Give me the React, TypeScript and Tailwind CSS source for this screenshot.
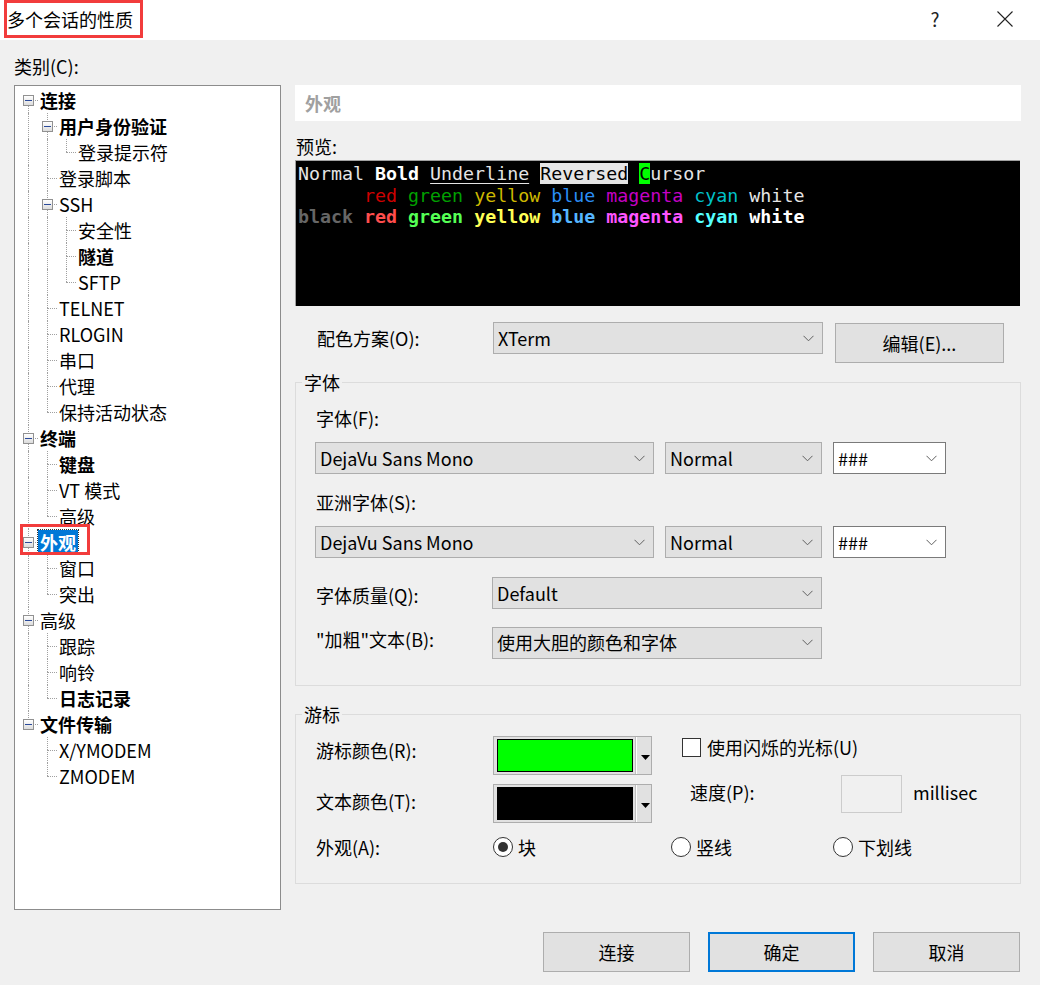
import React from 'react';

type TreeItem = { label: string; bold?: boolean; selected?: boolean; children?: TreeItem[] };

type Row = {
  label: string;
  level: number;
  bold?: boolean;
  selected?: boolean;
  exp: boolean;
  first: boolean;
  last: boolean;
  cont: boolean[];
};

const tree: TreeItem[] = [
  {
    label: '连接',
    bold: true,
    children: [
      { label: '用户身份验证', bold: true, children: [{ label: '登录提示符' }] },
      { label: '登录脚本' },
      { label: 'SSH', children: [{ label: '安全性' }, { label: '隧道', bold: true }, { label: 'SFTP' }] },
      { label: 'TELNET' },
      { label: 'RLOGIN' },
      { label: '串口' },
      { label: '代理' },
      { label: '保持活动状态' },
    ],
  },
  { label: '终端', bold: true, children: [{ label: '键盘', bold: true }, { label: 'VT 模式' }, { label: '高级' }] },
  { label: '外观', bold: true, selected: true, children: [{ label: '窗口' }, { label: '突出' }] },
  { label: '高级', children: [{ label: '跟踪' }, { label: '响铃' }, { label: '日志记录', bold: true }] },
  { label: '文件传输', bold: true, children: [{ label: 'X/YMODEM' }, { label: 'ZMODEM' }] },
];

function flatten(items: TreeItem[], level: number, cont: boolean[], out: Row[]) {
  items.forEach((it, i) => {
    const last = i === items.length - 1;
    out.push({
      label: it.label,
      level,
      bold: it.bold,
      selected: it.selected,
      exp: !!it.children,
      first: level === 0 && i === 0,
      last,
      cont,
    });
    if (it.children) flatten(it.children, level + 1, [...cont, !last], out);
  });
  return out;
}

const rows = flatten(tree, 0, [], []);

const TreeRow: React.FC<{ row: Row }> = ({ row }) => {
  const x = 13 + 19 * row.level;
  const textX = 23 + 19 * row.level;
  return (
    <div className="relative h-[26px] flex items-center">
      {row.cont.map((c, a) =>
        c ? (
          <span
            key={a}
            className="absolute top-0 bottom-0 border-l border-dotted border-[#a0a0a0]"
            style={{ left: 13 + 19 * a }}
          />
        ) : null
      )}
      {!row.first && (
        <span className="absolute top-0 h-[13px] border-l border-dotted border-[#a0a0a0]" style={{ left: x }} />
      )}
      {!row.last && (
        <span className="absolute top-[13px] bottom-0 border-l border-dotted border-[#a0a0a0]" style={{ left: x }} />
      )}
      <span className="absolute top-[13px] w-[10px] border-t border-dotted border-[#a0a0a0]" style={{ left: x }} />
      {row.exp && (
        <span
          className="absolute top-[8px] w-[11px] h-[11px] border border-[#919191] bg-gradient-to-b from-white to-[#dcdcdc] flex items-center justify-center"
          style={{ left: x - 5 }}
        >
          <span className="w-[7px] h-px bg-[#2a4a9a]" />
        </span>
      )}
      <span
        className={`relative px-[2px] leading-[24px] whitespace-pre ${row.bold ? 'font-bold' : ''} ${
          row.selected ? 'bg-[#0078d7] text-white outline-1 outline-dotted outline-[#333]' : ''
        }`}
        style={{ marginLeft: textX }}
      >
        {row.label}
      </span>
      {row.selected && (
        <span className="absolute left-[5px] top-[-5px] w-[70px] h-[31px] border-[3px] border-[#f23c3c] pointer-events-none" />
      )}
    </div>
  );
};

const Chevron: React.FC = () => (
  <svg width="11" height="7" viewBox="0 0 11 7" className="shrink-0">
    <polyline points="0.5,0.8 5.5,5.8 10.5,0.8" fill="none" stroke="#606060" strokeWidth="1" />
  </svg>
);

const Select: React.FC<{ className: string; text: string; white?: boolean }> = ({ className, text, white }) => (
  <div
    className={`h-[32px] flex items-center justify-between border pl-[4px] pr-[8px] ${
      white ? 'bg-white border-[#7a7a7a]' : 'bg-[#e1e1e1] border-[#adadad]'
    } ${className}`}
  >
    <span className="whitespace-pre">{text}</span>
    <Chevron />
  </div>
);

const ColorButton: React.FC<{ color: string }> = ({ color }) => (
  <div className="w-[159px] h-[39px] border border-[#adadad] bg-[#e1e1e1] flex items-center pl-[3px]">
    <div className="w-[136px] h-[33px] border border-black" style={{ background: color }} />
    <div className="ml-[2px] w-[2px] h-[37px] border-l border-[#c0c0c0] bg-white" />
    <svg width="9" height="5" viewBox="0 0 9 5" className="ml-[4px] mt-[3px]">
      <polygon points="0,0 9,0 4.5,5" fill="#000" />
    </svg>
  </div>
);

const Radio: React.FC<{ checked?: boolean; label: string; className: string }> = ({ checked, label, className }) => (
  <div className={`flex items-center gap-[5px] ${className}`}>
    <span className="w-[20px] h-[20px] rounded-full border border-[#333] bg-white flex items-center justify-center">
      {checked && <span className="w-[10px] h-[10px] rounded-full bg-[#333]" />}
    </span>
    <span className="leading-[24px]">{label}</span>
  </div>
);

const Button: React.FC<{ label: string; primary?: boolean; className?: string }> = ({ label, primary, className }) => (
  <div
    className={`h-[40px] flex items-center justify-center bg-[#e1e1e1] ${
      primary ? 'border-2 border-[#0078d7]' : 'border border-[#adadad]'
    } ${className ?? 'w-[147px]'}`}
  >
    {label}
  </div>
);

const App: React.FC = () => {
  const mono = { fontFamily: '"DejaVu Sans Mono", monospace' };
  return (
    <div
      className="w-[1040px] h-[985px] bg-[#f0f0f0] text-[18px] text-black overflow-hidden"
      style={{ fontFamily: '"Noto Sans CJK SC", "Noto Sans", sans-serif' }}
    >
      {/* title bar */}
      <div className="h-[40px] bg-white flex items-start">
        <div className="ml-[4px] h-[38px] border-[3px] border-[#f23c3c] pr-[7px] flex items-center leading-[24px]">
          多个会话的性质
        </div>
        <div className="ml-auto flex">
          <div className="w-[70px] h-[38px] flex items-center justify-center text-[19px] text-[#222]">?</div>
          <div className="w-[70px] h-[38px] flex items-center justify-center">
            <svg width="16" height="16" viewBox="0 0 16 16">
              <path d="M0.5 0.5 L15.5 15.5 M15.5 0.5 L0.5 15.5" stroke="#222" strokeWidth="1.1" fill="none" />
            </svg>
          </div>
        </div>
      </div>

      {/* body */}
      <div className="flex pt-[14px] pl-[14px]">
        <div className="w-[267px]">
          <div className="leading-[24px]">类别(C):</div>
          <div className="mt-[7px] h-[825px] border border-[#8c8c8c] bg-white pt-[1px]">
            {rows.map((r, i) => (
              <TreeRow key={i} row={r} />
            ))}
          </div>
        </div>

        <div className="ml-[14px] mt-[31px] w-[726px]">
          <div className="h-[36px] bg-white flex items-center pl-[10px] font-bold text-[#a0a0a0]">外观</div>
          <div className="mt-[13px] leading-[24px] pl-px">预览:</div>
          <div
            className="mt-[2px] h-[146px] w-[725px] bg-black border-t border-l border-[#a0a0a0] pt-[2px] pl-[2px] text-[18.3px] leading-[21.5px] text-[#e5e5e5] whitespace-pre"
            style={mono}
          >
            <div>
              {'Normal '}
              <b className="text-white">Bold</b> <span className="underline underline-offset-[3px]">Underline</span>{' '}
              <span className="bg-[#e5e5e5] text-black">Reversed</span>{' '}
              <span className="bg-[#00ff00] text-black">C</span>ursor
            </div>
            <div>
              {'      '}
              <span className="text-[#cd0000]">red</span> <span className="text-[#00a000]">green</span>{' '}
              <span className="text-[#cdb800]">yellow</span> <span className="text-[#2a8ef5]">blue</span>{' '}
              <span className="text-[#c400c4]">magenta</span> <span className="text-[#00c0c8]">cyan</span>{' '}
              <span className="text-[#e5e5e5]">white</span>
            </div>
            <div className="font-bold">
              <span className="text-[#666666]">black</span> <span className="text-[#ff4d4d]">red</span>{' '}
              <span className="text-[#55ff55]">green</span> <span className="text-[#ffff55]">yellow</span>{' '}
              <span className="text-[#55b6ff]">blue</span> <span className="text-[#ff55ff]">magenta</span>{' '}
              <span className="text-[#55ffff]">cyan</span> <span className="text-white">white</span>
            </div>
          </div>

          <div className="mt-[16px] flex items-start">
            <div className="w-[198px] pl-[22px] h-[32px] flex items-center">配色方案(O):</div>
            <Select className="w-[330px]" text="XTerm" />
            <div className="ml-[12px] mt-px">
              <Button label="编辑(E)..." className="w-[169px]" />
            </div>
          </div>

          {/* 字体 group */}
          <fieldset className="mt-[7px] w-[726px] border border-[#dcdcdc] px-[6px] pb-[26px]">
            <legend className="px-[2px] leading-[24px]">字体</legend>
            <div className="pl-[13px]">
              <div className="mt-[12px] leading-[24px] pl-px">字体(F):</div>
              <div className="mt-[12px] flex gap-[11px]">
                <Select className="w-[339px]" text="DejaVu Sans Mono" />
                <Select className="w-[157px]" text="Normal" />
                <Select className="w-[113px]" text="###" white />
              </div>
              <div className="mt-[16px] leading-[24px] pl-px">亚洲字体(S):</div>
              <div className="mt-[12px] flex gap-[11px]">
                <Select className="w-[339px]" text="DejaVu Sans Mono" />
                <Select className="w-[157px]" text="Normal" />
                <Select className="w-[113px]" text="###" white />
              </div>
              <div className="mt-[19px] flex items-center">
                <div className="w-[177px] pl-px pt-[4px]">字体质量(Q):</div>
                <Select className="w-[330px] h-[31px]" text="Default" />
              </div>
              <div className="mt-[17px] flex items-center">
                <div className="w-[177px] pl-px pb-[6px]">"加粗"文本(B):</div>
                <Select className="w-[330px] h-[31px]" text="使用大胆的颜色和字体" />
              </div>
            </div>
          </fieldset>

          {/* 游标 group */}
          <fieldset className="mt-[16px] w-[726px] border border-[#dcdcdc] px-[6px] pb-[26px]">
            <legend className="px-[2px] leading-[24px]">游标</legend>
            <div className="pl-[13px]">
              <div className="flex items-start">
                <div>
                  <div className="mt-[10px] flex items-start">
                    <div className="w-[178px] pl-px mt-[2px] leading-[24px]">游标颜色(R):</div>
                    <ColorButton color="#00ff00" />
                  </div>
                  <div className="mt-[9px] flex items-start">
                    <div className="w-[178px] pl-px mt-[5px] leading-[24px]">文本颜色(T):</div>
                    <ColorButton color="#000000" />
                  </div>
                </div>
                <div className="ml-[30px]">
                  <div className="mt-[12px] flex items-center gap-[6px] h-[19px]">
                    <span className="w-[19px] h-[19px] border border-[#333] bg-white" />
                    <span className="leading-[24px] -mt-[2px]">使用闪烁的光标(U)</span>
                  </div>
                  <div className="mt-[18px] flex items-center">
                    <div className="w-[159px] pl-[8px] pb-[3px]">速度(P):</div>
                    <div className="w-[61px] h-[38px] border border-[#cccccc] bg-[#f0f0f0]" />
                    <div className="ml-[11px] pb-[3px]">millisec</div>
                  </div>
                </div>
              </div>
              <div className="mt-[14px] flex items-center h-[20px]">
                <div className="w-[178px] pl-px">外观(A):</div>
                <Radio checked label="块" className="w-[178px]" />
                <Radio label="竖线" className="w-[162px]" />
                <Radio label="下划线" className="w-[120px]" />
              </div>
            </div>
          </fieldset>
        </div>
      </div>

      <div className="mt-[22px] flex justify-end pr-[20px] gap-[18px]">
        <Button label="连接" />
        <Button label="确定" primary />
        <Button label="取消" />
      </div>
    </div>
  );
};

export default App;
